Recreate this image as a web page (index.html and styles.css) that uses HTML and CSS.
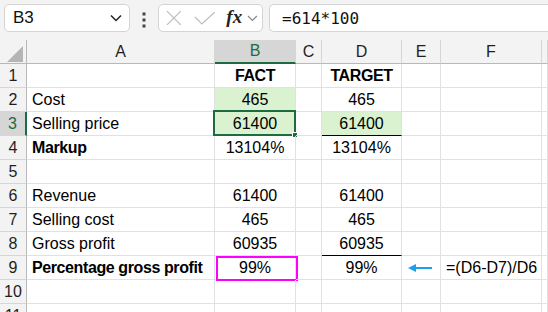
FILE: index.html
```html
<!DOCTYPE html>
<html lang="en">
<head>
  <meta charset="UTF-8">
  <link rel="stylesheet" href="styles.css">
  <title>Markup sheet</title>
</head>
<body class="page">
  <header class="toolbar">
    <div class="namebox">
      <span class="namebox__ref">B3</span>
      <svg class="namebox__chevron" width="12" height="8" viewBox="0 0 12 8"><path d="M1 1.5 L6 6.5 L11 1.5" fill="none" stroke="#222" stroke-width="1.5"/></svg>
    </div>
    <svg class="toolbar__dots" width="4" height="16" viewBox="0 0 4 16">
      <rect x="0.5" y="0.5" width="3" height="3" fill="#444"/>
      <rect x="0.5" y="6.5" width="3" height="3" fill="#444"/>
      <rect x="0.5" y="12.5" width="3" height="3" fill="#444"/>
    </svg>
    <div class="actions">
      <svg class="actions__icon" width="18" height="16" viewBox="0 0 18 16"><path d="M2 1 L16 15 M16 1 L2 15" stroke="#bdbdbd" stroke-width="1.3" fill="none"/></svg>
      <svg class="actions__icon" width="22" height="14" viewBox="0 0 22 14"><path d="M1 6 L8 13 L21 1" stroke="#bdbdbd" stroke-width="1.3" fill="none"/></svg>
      <span class="actions__fx">fx</span>
      <svg class="actions__chevron" width="11" height="7" viewBox="0 0 11 7"><path d="M1 1 L5.5 5.5 L10 1" fill="none" stroke="#888" stroke-width="1.2"/></svg>
    </div>
    <div class="formula">=614*100</div>
  </header>

  <main class="sheet">
    <div class="cell cell_corner"><span class="corner"></span></div>
    <div class="cell cell_col">A</div>
    <div class="cell cell_col cell_col-active">B</div>
    <div class="cell cell_col">C</div>
    <div class="cell cell_col">D</div>
    <div class="cell cell_col">E</div>
    <div class="cell cell_col">F</div>
    <div class="cell cell_col"></div>

    <div class="cell cell_row">1</div>
    <div class="cell"></div>
    <div class="cell cell_num cell_bold">FACT</div>
    <div class="cell"></div>
    <div class="cell cell_num cell_bold">TARGET</div>
    <div class="cell"></div>
    <div class="cell"></div>
    <div class="cell"></div>

    <div class="cell cell_row">2</div>
    <div class="cell cell_label">Cost</div>
    <div class="cell cell_num cell_fill">465</div>
    <div class="cell"></div>
    <div class="cell cell_num">465</div>
    <div class="cell"></div>
    <div class="cell"></div>
    <div class="cell"></div>

    <div class="cell cell_row cell_row-active">3</div>
    <div class="cell cell_label">Selling price</div>
    <div class="cell cell_num cell_fill">61400<span class="selection"><span class="selection__handle"></span></span></div>
    <div class="cell"></div>
    <div class="cell cell_num cell_fill cell_underline">61400</div>
    <div class="cell"></div>
    <div class="cell"></div>
    <div class="cell"></div>

    <div class="cell cell_row">4</div>
    <div class="cell cell_label cell_bold">Markup</div>
    <div class="cell cell_num">13104%</div>
    <div class="cell"></div>
    <div class="cell cell_num">13104%</div>
    <div class="cell"></div>
    <div class="cell"></div>
    <div class="cell"></div>

    <div class="cell cell_row">5</div>
    <div class="cell"></div>
    <div class="cell"></div>
    <div class="cell"></div>
    <div class="cell"></div>
    <div class="cell"></div>
    <div class="cell"></div>
    <div class="cell"></div>

    <div class="cell cell_row">6</div>
    <div class="cell cell_label">Revenue</div>
    <div class="cell cell_num">61400</div>
    <div class="cell"></div>
    <div class="cell cell_num">61400</div>
    <div class="cell"></div>
    <div class="cell"></div>
    <div class="cell"></div>

    <div class="cell cell_row">7</div>
    <div class="cell cell_label">Selling cost</div>
    <div class="cell cell_num">465</div>
    <div class="cell"></div>
    <div class="cell cell_num">465</div>
    <div class="cell"></div>
    <div class="cell"></div>
    <div class="cell"></div>

    <div class="cell cell_row">8</div>
    <div class="cell cell_label">Gross profit</div>
    <div class="cell cell_num">60935</div>
    <div class="cell"></div>
    <div class="cell cell_num cell_underline">60935</div>
    <div class="cell"></div>
    <div class="cell"></div>
    <div class="cell"></div>

    <div class="cell cell_row">9</div>
    <div class="cell cell_label cell_bold">Percentage gross profit</div>
    <div class="cell cell_num">99%<span class="highlight"></span></div>
    <div class="cell"></div>
    <div class="cell cell_num">99%</div>
    <div class="cell cell_arrow">
      <svg width="24" height="8" viewBox="0 0 24 8"><path d="M0 4 L8 0 L8 3 L24 3 L24 5 L8 5 L8 8 Z" fill="#1a9fee"/></svg>
    </div>
    <div class="cell cell_label">=(D6-D7)/D6</div>
    <div class="cell"></div>

    <div class="cell cell_row">10</div>
    <div class="cell"></div>
    <div class="cell"></div>
    <div class="cell"></div>
    <div class="cell"></div>
    <div class="cell"></div>
    <div class="cell"></div>
    <div class="cell"></div>

    <div class="cell cell_row">11</div>
    <div class="cell"></div>
    <div class="cell"></div>
    <div class="cell"></div>
    <div class="cell"></div>
    <div class="cell"></div>
    <div class="cell"></div>
    <div class="cell"></div>
  </main>
</body>
</html>
```

FILE: styles.css
```css
html, .page {
  margin: 0;
  height: 100vh;
  overflow: hidden;
  font-family: 'Liberation Sans', Arial, sans-serif;
  background: #ffffff;
  color: #000000;
}

* {
  box-sizing: border-box;
}

.toolbar {
  display: flex;
  align-items: flex-start;
  height: 40px;
  padding: 4px 0 0 4px;
  background: #f3f3f3;
}

.namebox {
  display: flex;
  align-items: center;
  justify-content: space-between;
  width: 126px;
  height: 28px;
  padding: 0 7px 0 8px;
  background: #fff;
  border: 1px solid #d4d4d4;
  border-radius: 5px;
  font-size: 17px;
  color: #111;
}

.toolbar__dots {
  margin: 8px 12px 0 12px;
}

.actions {
  display: flex;
  align-items: center;
  width: 105px;
  height: 28px;
  padding: 0 4px 0 6px;
  background: #fff;
  border: 1px solid #d4d4d4;
  border-radius: 5px;
}

.actions__icon {
  margin-right: 11px;
}

.actions__fx {
  font-family: 'Liberation Serif', 'Times New Roman', serif;
  font-style: italic;
  font-weight: bold;
  font-size: 19px;
  color: #222;
  margin: -3px 5px 0 0;
}

.formula {
  flex: 1;
  height: 28px;
  margin-left: 6px;
  padding: 4px 0 0 12px;
  background: #fff;
  border: 1px solid #d4d4d4;
  border-right: none;
  border-radius: 5px 0 0 5px;
  font-family: 'DejaVu Sans Mono', 'Liberation Mono', monospace;
  font-size: 16px;
  color: #111;
}

.sheet {
  display: grid;
  grid-template-columns: 27px 188px 81px 26px 80px 39px 101px 1fr;
  grid-auto-rows: 24px;
}

.cell {
  position: relative;
  display: flex;
  align-items: center;
  border-right: 1px solid #e1e1e1;
  border-bottom: 1px solid #e1e1e1;
  font-size: 16px;
  white-space: nowrap;
}

.cell_corner,
.cell_col,
.cell_row {
  background: #f3f3f3;
  color: #1f1f1f;
  justify-content: center;
}

.cell_col {
  border-right-color: #d6d6d6;
  border-bottom-color: #b8b8b8;
}

.cell_col-active {
  background: #d6d6d6;
  color: #1d6b40;
  border-bottom: 2px solid #1d6b40;
}

.cell_corner {
  border-right-color: #b8b8b8;
  border-bottom-color: #b8b8b8;
}

.corner {
  width: 0;
  height: 0;
  margin: 4px -4px 0 0;
  border-left: 16px solid transparent;
  border-bottom: 16px solid #b5b5b5;
}

.cell_row {
  border-right-color: #b8b8b8;
  border-bottom-color: #d6d6d6;
}

.cell_row-active {
  background: #d6d6d6;
  color: #1d6b40;
  border-right: 2px solid #1d6b40;
}

.cell_label {
  padding-left: 5px;
}

.cell_num {
  justify-content: center;
}

.cell_bold {
  font-weight: bold;
  font-size: 16px;
  letter-spacing: -0.4px;
}

.cell_fill {
  background: #daf2d0;
}

.cell_underline {
  border-bottom-color: #000;
}

.cell_arrow {
  padding-left: 6px;
}

.selection {
  position: absolute;
  top: -2px;
  left: -2px;
  right: -1px;
  bottom: -1px;
  border: 2px solid #1d6b40;
}

.selection__handle {
  position: absolute;
  right: -4px;
  bottom: -4px;
  width: 6px;
  height: 6px;
  background: #1d6b40;
  border: 1px solid #fff;
}

.highlight {
  position: absolute;
  top: 0;
  left: 1px;
  right: -3px;
  bottom: -2px;
  border: 2px solid #ff00ff;
}
```
